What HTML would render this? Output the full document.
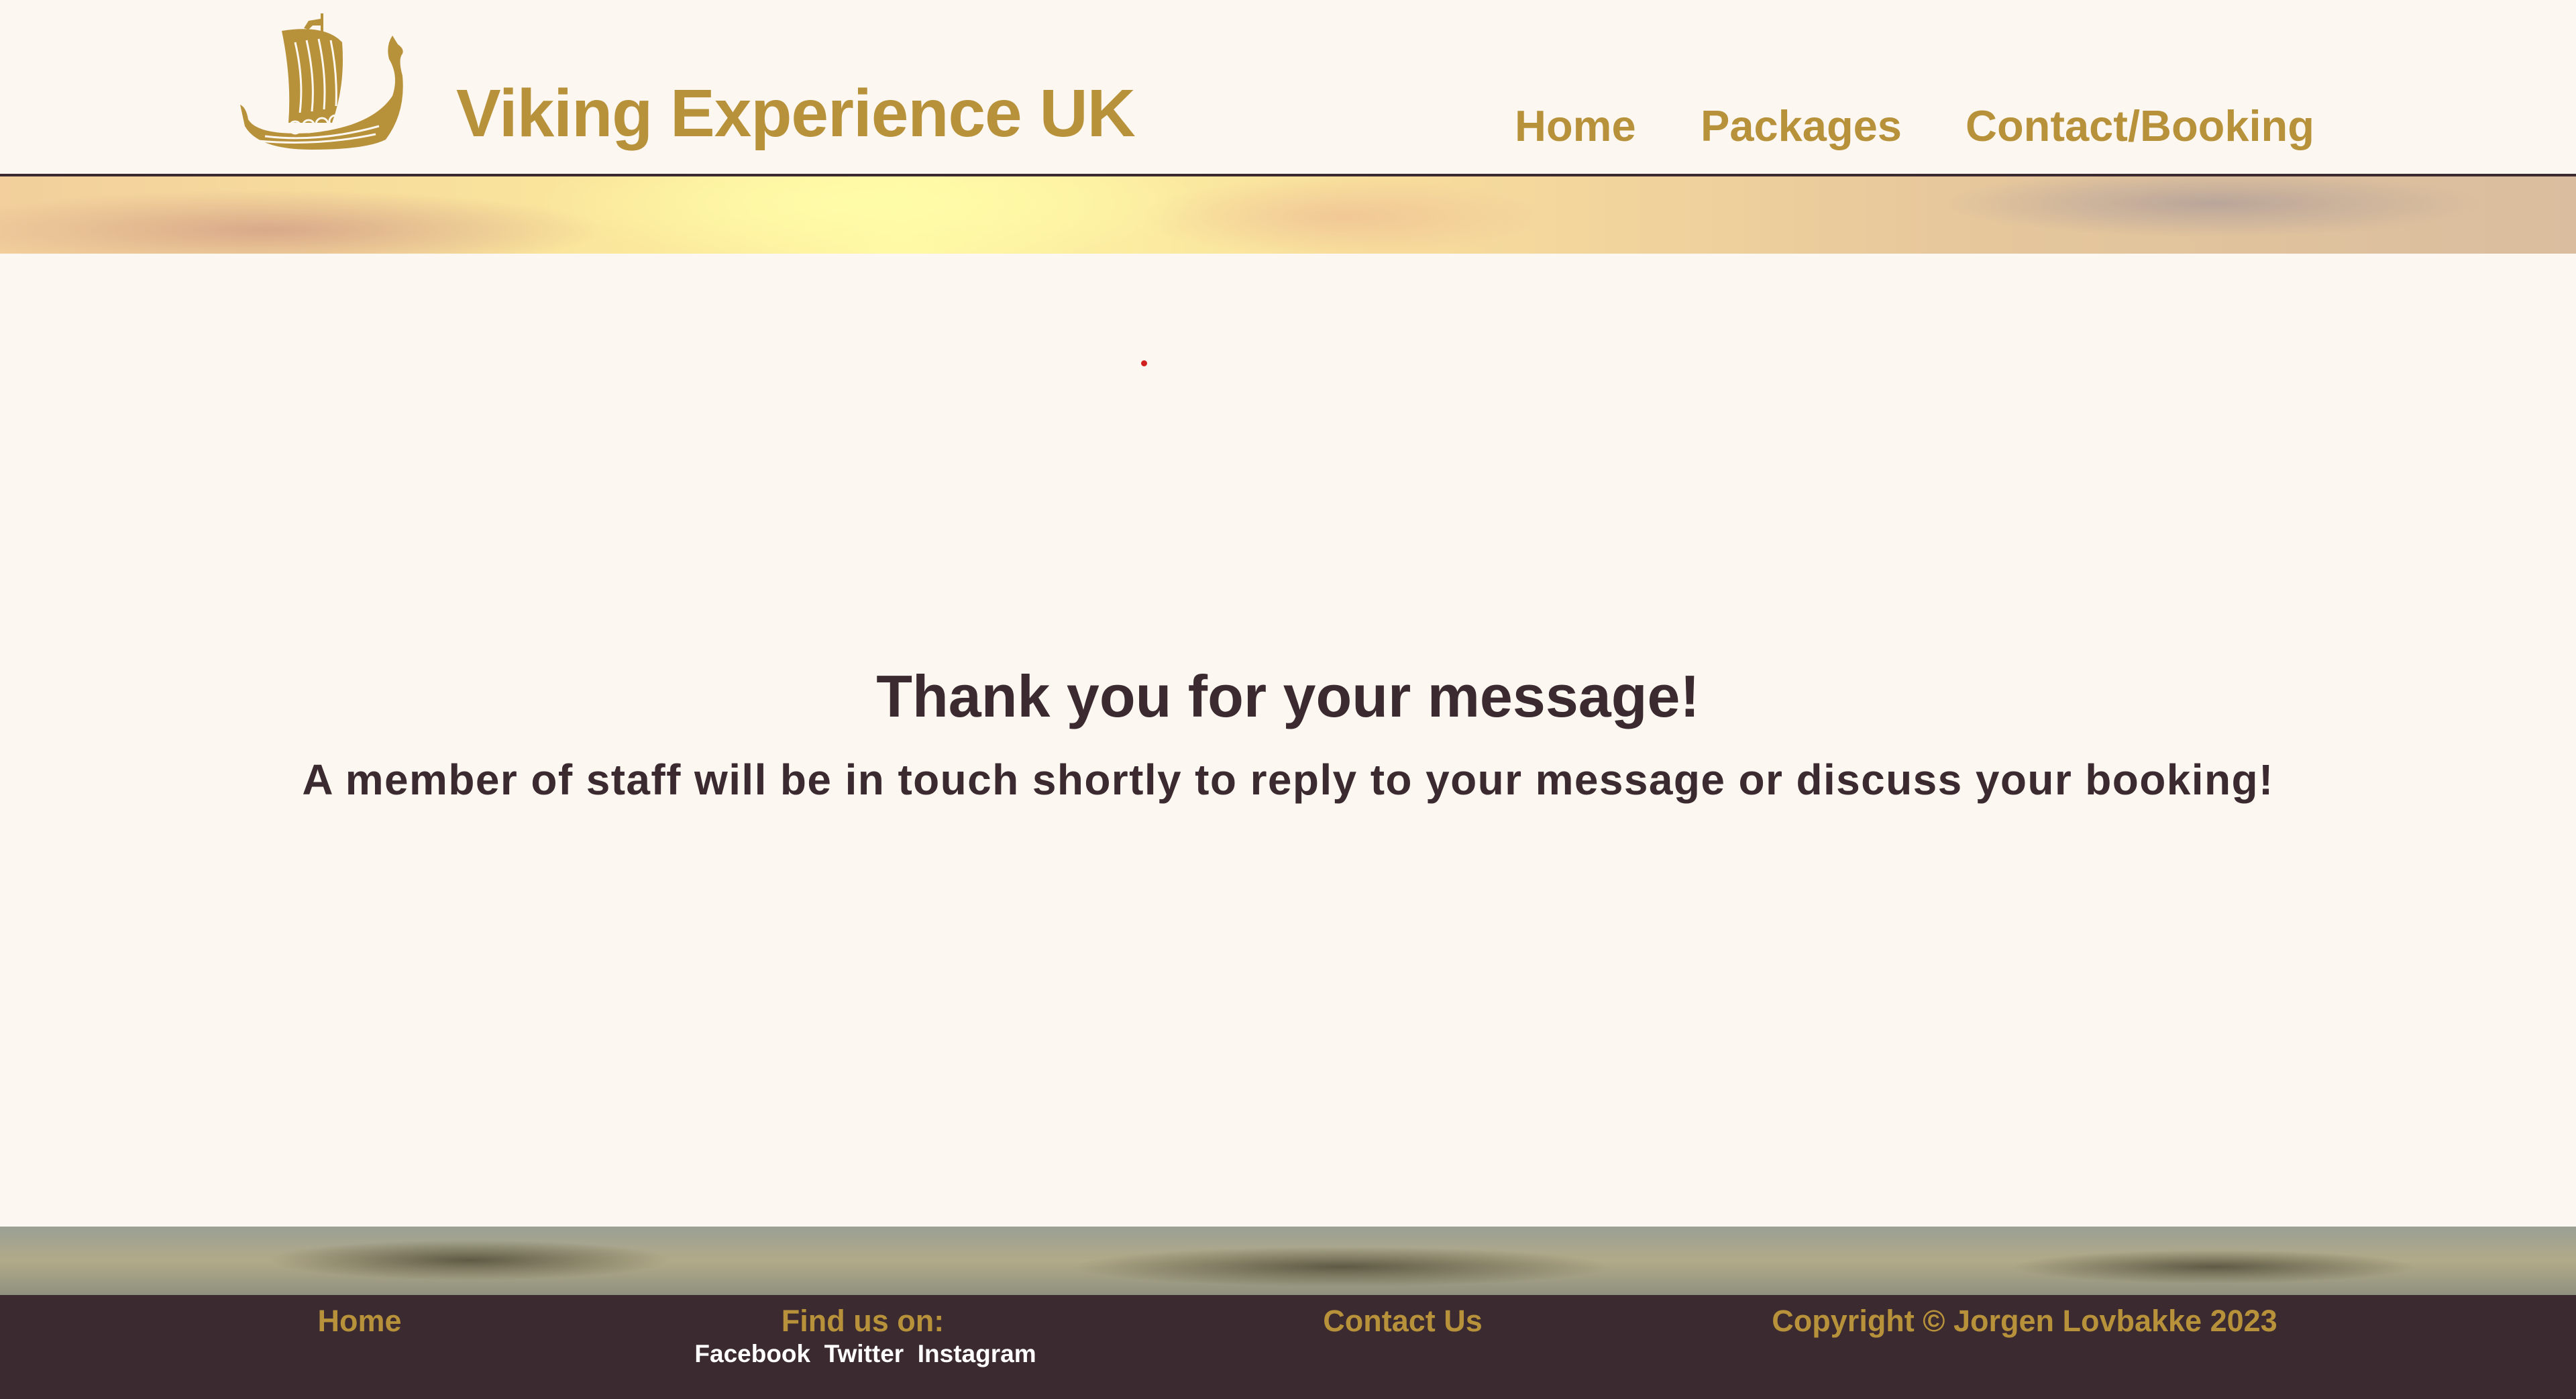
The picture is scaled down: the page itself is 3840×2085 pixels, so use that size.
<!DOCTYPE html>
<html><head><meta charset="utf-8"><style>
*{margin:0;padding:0;box-sizing:border-box}
body{width:3840px;height:2085px;background:#fdf7f1;position:relative;overflow:hidden;font-family:"Liberation Sans",sans-serif}
.a{position:absolute;white-space:nowrap}
.gold{color:#b8923a}
#line{left:0;top:259px;width:3840px;height:4px;background:#3b2b30}
#sky{left:0;top:263px;width:3840px;height:115px;background:
radial-gradient(ellipse 500px 90px at 1300px 40px,#fffca8,transparent),
radial-gradient(ellipse 300px 60px at 2000px 60px,#eab28f88,transparent),
radial-gradient(ellipse 500px 60px at 400px 80px,#d9a98a,transparent),
radial-gradient(ellipse 400px 50px at 3300px 40px,#b9a59a,transparent),
linear-gradient(90deg,#f2cf9c,#fbe89c 25%,#fff8a4 35%,#f7dc9c 55%,#e7c89c 75%,#d9bd9e)}
#water{left:0;top:1828px;width:3840px;height:102px;background:
radial-gradient(ellipse 300px 30px at 700px 50px,#5e5a45,transparent),
radial-gradient(ellipse 400px 30px at 2000px 60px,#5e5a45,transparent),
radial-gradient(ellipse 300px 25px at 3300px 60px,#5e5a45,transparent),
linear-gradient(180deg,#9aa094,#b2aa88 50%,#8f917f)}
#foot{left:0;top:1930px;width:3840px;height:155px;background:#3b2b30}
h1{position:absolute;left:0;width:3840px;text-align:center;top:987px;font-size:88px;color:#3b2b30;font-weight:bold}
h2{position:absolute;left:0;width:3840px;text-align:center;top:1125px;font-size:64px;color:#3b2b30;font-weight:bold;letter-spacing:1.4px}
.nav{font-size:65px;font-weight:bold;top:150px}
.f{font-size:45px;font-weight:bold;top:1943px;transform:translateX(-50%)}
</style></head><body>
<svg class="a" style="left:355px;top:18px" width="280" height="210" viewBox="0 0 280 210">
<g fill="#b8923a">
<path d="M123 2 L127 2 L127 48 L123 48Z"/>
<path d="M123 10 L105 13 L98 24 L105 26 L111 20 L123 20Z"/>
<path d="M65 28 Q130 18 155 45 Q160 110 140 165 L75 165 Q80 100 65 28Z"/>
<path d="M3 138 Q12 142 15 160 Q30 185 110 180 Q200 170 230 125 Q240 95 225 70 Q220 50 230 35 L238 48 Q248 55 245 62 Q238 70 245 95 Q250 150 220 190 Q190 205 110 205 Q30 205 10 170 Z"/>
</g>
<g fill="none" stroke="#fdf7f1" stroke-width="3">
<circle cx="85" cy="172" r="9"/><circle cx="105" cy="170" r="9"/><circle cx="125" cy="167" r="9"/><circle cx="145" cy="163" r="9"/><circle cx="165" cy="158" r="9"/>
<path d="M85 45 Q98 100 92 150 M102 42 Q115 100 110 148 M120 40 Q132 95 128 145 M138 42 Q148 90 146 140"/>
<path d="M40 185 Q120 195 210 170 M30 192 Q120 200 205 182"/>
</g>
</svg>
<div class="a gold" style="left:680px;top:112px;font-size:100px;font-weight:bold;letter-spacing:-1px">Viking Experience UK</div>
<div class="a gold nav" style="left:2258px">Home</div>
<div class="a gold nav" style="left:2535px">Packages</div>
<div class="a gold nav" style="left:2930px">Contact/Booking</div>
<div class="a" id="line"></div>
<div class="a" id="sky"></div>
<div class="a" style="left:1701px;top:537px;width:9px;height:9px;border-radius:50%;background:#d02020"></div>
<h1>Thank you for your message!</h1>
<h2>A member of staff will be in touch shortly to reply to your message or discuss your booking!</h2>
<div class="a" id="water"></div>
<div class="a" id="foot"></div>
<div class="a gold f" style="left:536px">Home</div>
<div class="a gold f" style="left:1286px">Find us on:</div>
<div class="a f" style="left:1290px;top:1997px;font-size:37px;color:#fff">Facebook&nbsp; Twitter&nbsp; Instagram</div>
<div class="a gold f" style="left:2091px">Contact Us</div>
<div class="a gold f" style="left:3018px">Copyright © Jorgen Lovbakke 2023</div>
</body></html>
